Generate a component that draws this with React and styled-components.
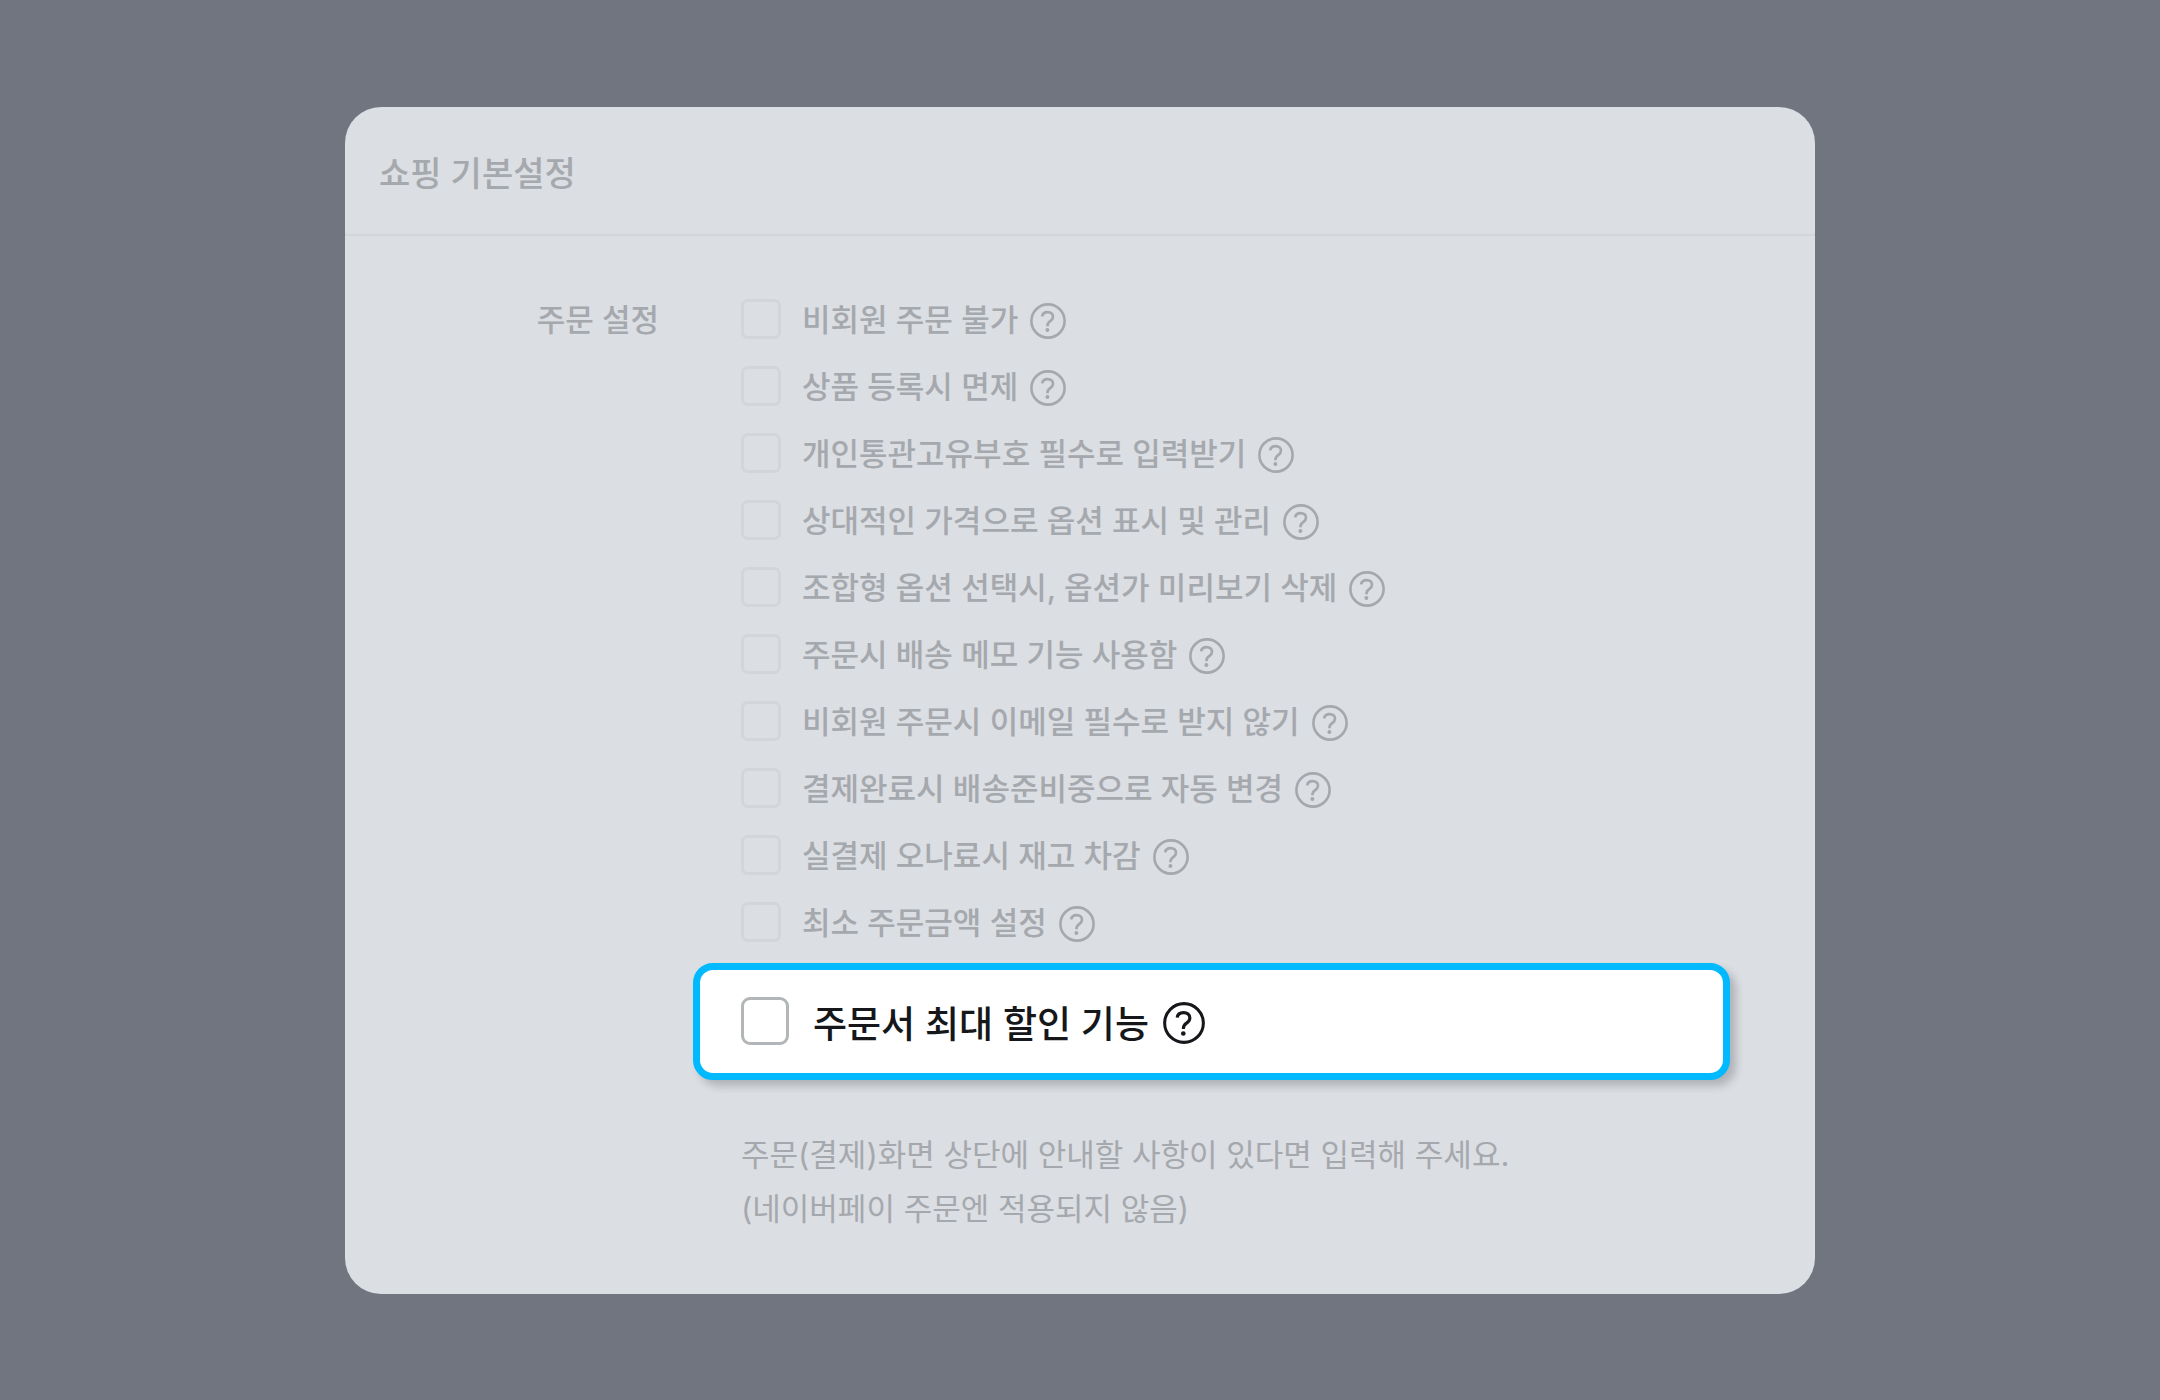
import React, { useId } from "react";
import styled, { createGlobalStyle } from "styled-components";

const GlobalStyle = createGlobalStyle`
  *, *::before, *::after { box-sizing: border-box; }
  body {
    margin: 0;
    background: #717580;
    font-family: Inter, "Noto Sans CJK KR", sans-serif;
  }
`;

const Page = styled.main`
  display: flex;
  justify-content: center;
  align-items: center;
  min-height: 100vh;
  padding: 48px;
`;

const Card = styled.section`
  width: 100%;
  max-width: 1470px;
  border-radius: 36px;
  background: #dbdee3;
  color: #a5a8ad;
`;

const CardHeader = styled.header`
  padding: 39px 34px 32px;
  border-bottom: 2px solid #d2d5da;
`;

const Title = styled.h1`
  margin: 0;
  font-size: 34px;
  line-height: 56px;
  font-weight: 500;
`;

const CardBody = styled.div`
  display: grid;
  grid-template-columns: 348px 1fr;
  padding: 50px 85px 58px 0;
`;

const GroupLabel = styled.h2`
  margin: 0;
  padding-right: 34px;
  font-size: 31px;
  line-height: 67px;
  font-weight: 500;
  text-align: right;
`;

const OptionList = styled.ul`
  margin: 0;
  padding: 0;
  list-style: none;
`;

const OptionItem = styled.li`
  display: flex;
  align-items: center;
  gap: 12px;
  min-height: 67px;
  padding-left: 48px;
  font-size: 31px;
`;

const HighlightedItem = styled(OptionItem)`
  min-height: 117px;
  margin-top: 7px;
  padding-left: 41px;
  gap: 14px;
  border: 7px solid #00b9ff;
  border-radius: 20px;
  background: #fff;
  box-shadow: 6px 6px 8px rgba(0, 0, 0, 0.2);
  color: #15171a;
  font-size: 37px;
`;

const OptionLabel = styled.label`
  display: flex;
  align-items: center;
  gap: ${({ $large }) => ($large ? 24 : 21)}px;
  line-height: 48px;
  font-weight: 500;
`;

const OptionText = styled.span`
  padding-top: ${({ $large }) => ($large ? 8 : 2)}px;
`;

const Checkbox = styled.input.attrs({ type: "checkbox" })`
  appearance: none;
  flex: none;
  width: ${({ $large }) => ($large ? 48 : 40)}px;
  height: ${({ $large }) => ($large ? 48 : 40)}px;
  margin: 0;
  border: ${({ $large }) => ($large ? "3px solid #b3b6b8" : "3px solid #d2d5d9")};
  border-radius: ${({ $large }) => ($large ? 9 : 7)}px;
  cursor: pointer;

  &:checked { background: #00b9ff; }
`;

const HelpButton = styled.button`
  flex: none;
  width: ${({ $large }) => ($large ? 42 : 36)}px;
  height: ${({ $large }) => ($large ? 42 : 36)}px;
  margin: 3px 0 0;
  padding: 0;
  border: 0;
  background: none;
  color: inherit;
  cursor: pointer;

  svg { display: block; width: 100%; height: 100%; }
`;

const Notes = styled.p`
  margin: 48px 0 0;
  padding-left: 48px;
  font-size: 31px;
  line-height: 54px;
  font-weight: 400;
`;

const NoteLine = styled.span`
  display: block;
`;

const OPTIONS = [
  "비회원 주문 불가",
  "상품 등록시 면제",
  "개인통관고유부호 필수로 입력받기",
  "상대적인 가격으로 옵션 표시 및 관리",
  "조합형 옵션 선택시, 옵션가 미리보기 삭제",
  "주문시 배송 메모 기능 사용함",
  "비회원 주문시 이메일 필수로 받지 않기",
  "결제완료시 배송준비중으로 자동 변경",
  "실결제 오나료시 재고 차감",
  "최소 주문금액 설정",
];

function HelpIcon() {
  return (
    <svg viewBox="0 0 36 36" fill="none" aria-hidden="true">
      <circle cx="18" cy="18" r="16.6" stroke="currentColor" strokeWidth="2.6" />
      <path
        d="M12.2 13.4C12.5 10.7 14.6 9.1 17.6 9.1c3.2 0 5.4 1.8 5.4 4.6 0 2.1-1.1 3.2-2.8 4.4-1.9 1.3-2.7 2.2-2.7 4.3v.8"
        stroke="currentColor"
        strokeWidth="2.7"
      />
      <circle cx="17.4" cy="27" r="2" fill="currentColor" />
    </svg>
  );
}

function Option({ text, large = false }) {
  const id = useId();
  const Item = large ? HighlightedItem : OptionItem;
  return (
    <Item>
      <OptionLabel htmlFor={id} $large={large}>
        <Checkbox id={id} $large={large} />
        <OptionText $large={large}>{text}</OptionText>
      </OptionLabel>
      <HelpButton type="button" aria-label={`${text} 도움말`} $large={large}>
        <HelpIcon />
      </HelpButton>
    </Item>
  );
}

export default function App() {
  return (
    <>
      <GlobalStyle />
      <Page>
        <Card>
          <CardHeader>
            <Title>쇼핑 기본설정</Title>
          </CardHeader>
          <CardBody>
            <GroupLabel>주문 설정</GroupLabel>
            <div>
              <OptionList>
                {OPTIONS.map((text) => (
                  <Option key={text} text={text} />
                ))}
                <Option text="주문서 최대 할인 기능" large />
              </OptionList>
              <Notes>
                <NoteLine>주문(결제)화면 상단에 안내할 사항이 있다면 입력해 주세요.</NoteLine>
                <NoteLine>(네이버페이 주문엔 적용되지 않음)</NoteLine>
              </Notes>
            </div>
          </CardBody>
        </Card>
      </Page>
    </>
  );
}
